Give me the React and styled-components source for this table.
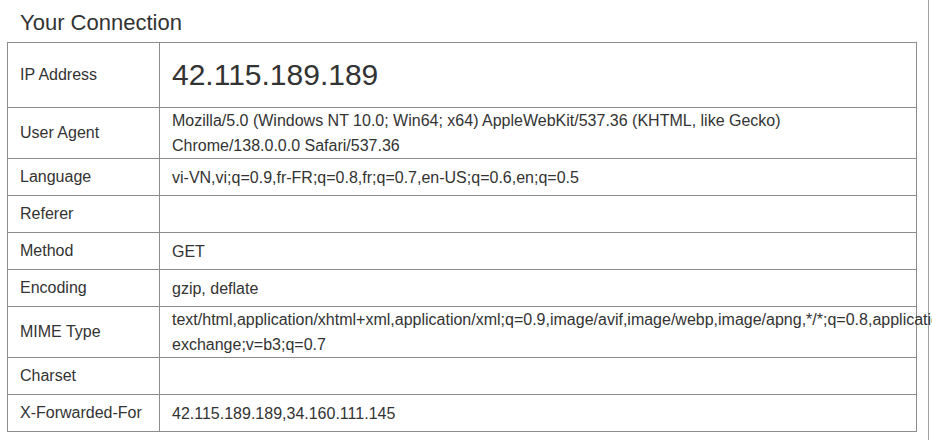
import React from 'react';
import styled, { createGlobalStyle } from 'styled-components';

const GlobalStyle = createGlobalStyle`
  html, body {
    margin: 0;
    padding: 0;
    background: #fff;
    overflow: hidden;
  }
  body {
    font-family: "Liberation Sans", Arial, sans-serif;
    color: #333;
  }
`;

const Page = styled.div`
  width: 928px;
  min-height: 440px;
  border-right: 1px solid #a0a0a0;
`;

const Title = styled.h2`
  margin: 0 0 6px;
  padding: 10px 0 0 20px;
  height: 26px;
  font-size: 22px;
  font-weight: normal;
  line-height: 25px;
  color: #333;
`;

const Table = styled.table`
  margin-left: 7px;
  width: 910px;
  table-layout: fixed;
  border-collapse: collapse;
  font-size: 16px;
  line-height: 24px;

  td {
    border: 1px solid #8c8c8c;
    padding: 0 12px;
    height: 36px;
    vertical-align: middle;
  }
`;

const Label = styled.td`
  width: 127px;
`;

const Value = styled.td`
  && {
    font-size: ${p => (p.$big ? '30px' : '16px')};
    line-height: ${p => (p.$big ? '34px' : '25px')};
    height: ${p => (p.$big ? '64px' : '36px')};
  }
`;

const rows = [
  ['IP Address', '42.115.189.189', true],
  [
    'User Agent',
    'Mozilla/5.0 (Windows NT 10.0; Win64; x64) AppleWebKit/537.36 (KHTML, like Gecko) Chrome/138.0.0.0 Safari/537.36',
  ],
  ['Language', 'vi-VN,vi;q=0.9,fr-FR;q=0.8,fr;q=0.7,en-US;q=0.6,en;q=0.5'],
  ['Referer', ''],
  ['Method', 'GET'],
  ['Encoding', 'gzip, deflate'],
  [
    'MIME Type',
    'text/html,application/xhtml+xml,application/xml;q=0.9,image/avif,image/webp,image/apng,*/*;q=0.8,application/signed-exchange;v=b3;q=0.7',
  ],
  ['Charset', ''],
  ['X-Forwarded-For', '42.115.189.189,34.160.111.145'],
];

const App = () => (
  <Page>
    <GlobalStyle />
    <Title>Your Connection</Title>
    <Table>
      <tbody>
        {rows.map(([label, value, big]) => (
          <tr key={label}>
            <Label>{label}</Label>
            <Value $big={big}>{value}</Value>
          </tr>
        ))}
      </tbody>
    </Table>
  </Page>
);

export default App;
